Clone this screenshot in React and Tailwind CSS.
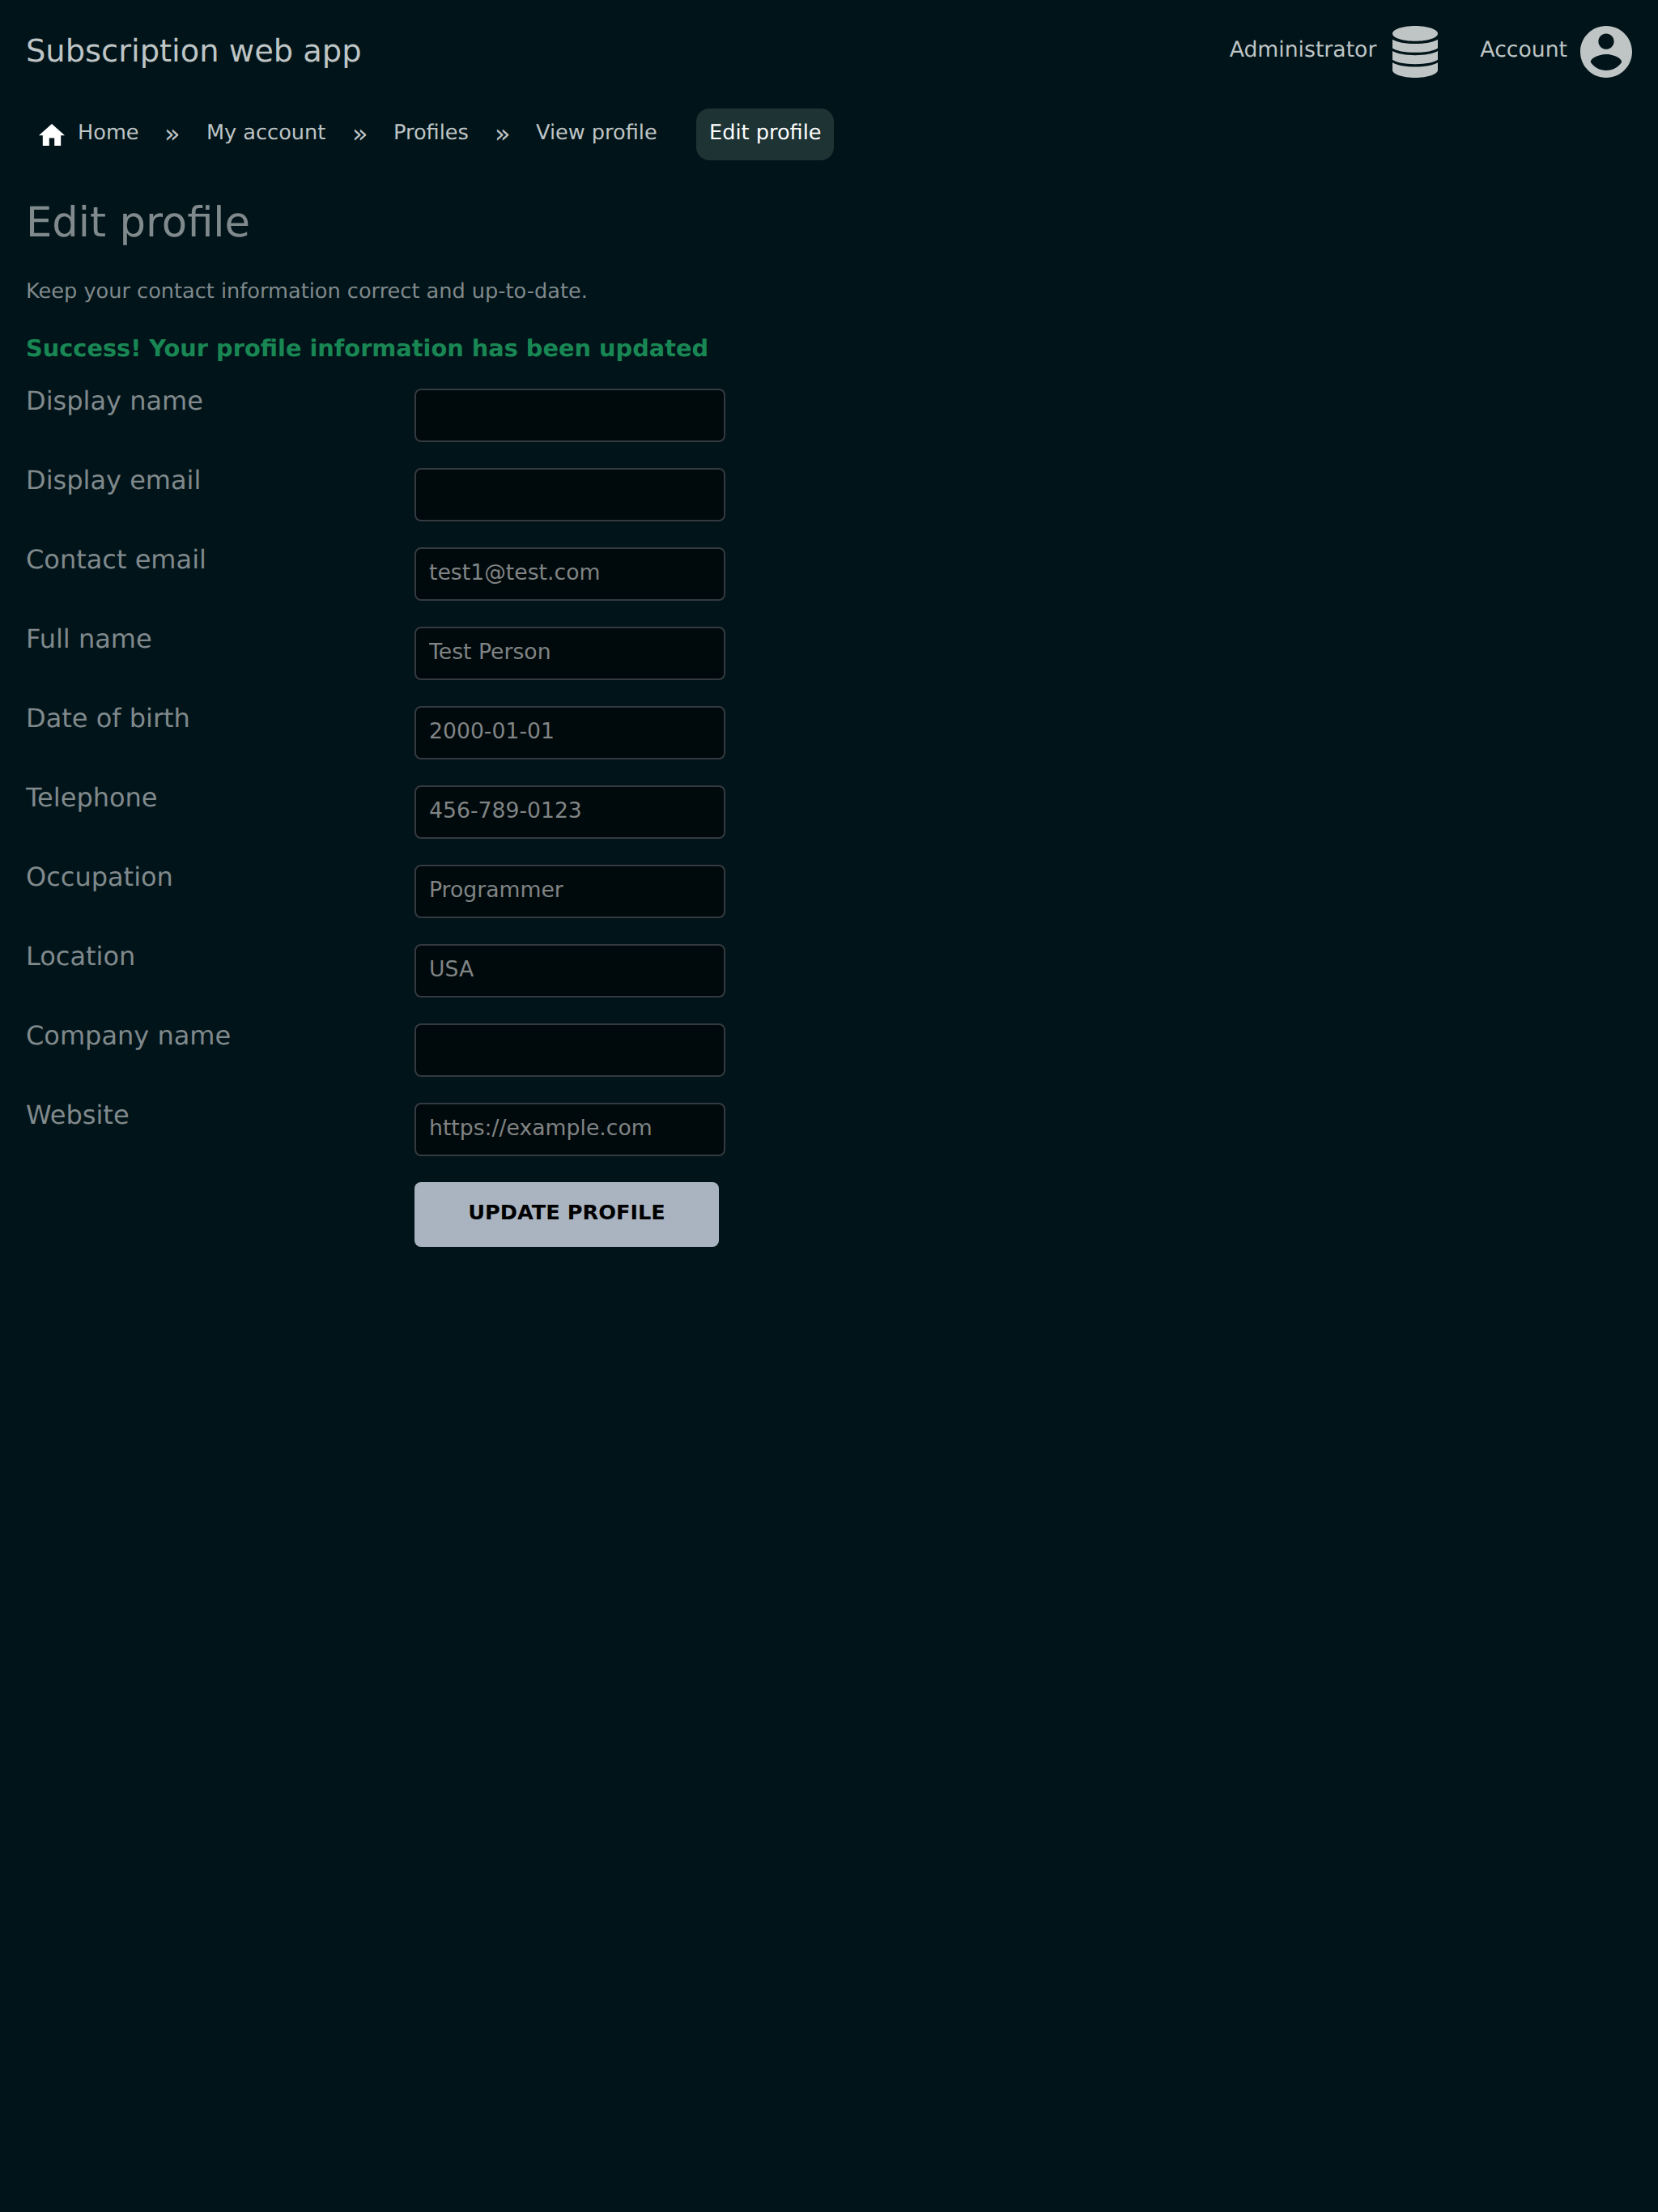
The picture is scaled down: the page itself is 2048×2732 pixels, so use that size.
const fields = [
  ["Display name", ""],
  ["Display email", ""],
  ["Contact email", "test1@test.com"],
  ["Full name", "Test Person"],
  ["Date of birth", "2000-01-01"],
  ["Telephone", "456-789-0123"],
  ["Occupation", "Programmer"],
  ["Location", "USA"],
  ["Company name", ""],
  ["Website", "https://example.com"],
];

const DatabaseIcon = () => (
  <svg className="h-16 w-14" viewBox="0 0 56 64" fill="currentColor">
    <path d="M28 0C43.500 0 56 4.300 56 9.500S43.500 18.800 28 18.800 0 14.700 0 9.500 12.500 0 28 0z" />
    <path d="M0 16.700C6 20.200 16 22 28 22s22-1.800 28-5.300v10.800c-5 3.300-14 5.300-28 5.300S5 30.800 0 27.500z" />
    <path d="M0 31C6 34.400 16 36.200 28 36.200s22-1.800 28-5.200v10.800c-5 3.300-14 5.400-28 5.400S5 45.100 0 41.800z" />
    <path d="M0 45.300C6 48.800 16 50.600 28 50.600s22-1.800 28-5.300v9.200C56 59.700 43.500 64 28 64S0 59.700 0 54.500z" />
  </svg>
);

const AccountIcon = () => (
  <svg className="size-16" viewBox="2 2 20 20" fill="currentColor">
    <path d="M12 2C6.480 2 2 6.480 2 12s4.480 10 10 10 10-4.480 10-10S17.520 2 12 2zm0 3c1.660 0 3 1.340 3 3s-1.340 3-3 3-3-1.340-3-3 1.340-3 3-3zm0 14.200c-2.500 0-4.710-1.280-6-3.220.030-1.990 4-3.080 6-3.080 1.990 0 5.970 1.090 6 3.080-1.290 1.940-3.500 3.220-6 3.220z" />
  </svg>
);

const HomeIcon = () => (
  <svg className="mt-[19px] h-[27px] w-8" viewBox="2 3 20 17" preserveAspectRatio="none" fill="white">
    <path d="M10 20v-6h4v6h5v-8h3L12 3 2 12h3v8z" />
  </svg>
);

const Separator = () => <span className="mt-[11px] w-[51px] text-[32px] leading-10">»</span>;

export default function App() {
  return (
    <div className="min-h-screen bg-[#001419] px-8 pt-8 font-['DejaVu_Sans',sans-serif] text-[25.6px] leading-10 text-[#80898c] [text-rendering:geometricPrecision]">
      <header className="flex h-16 items-start text-[26.67px] text-[#bfc4c5]">
        <div className="mt-1 flex-1 text-[38.4px] leading-[56px]">Subscription web app</div>
        <a className="mr-[52px] flex items-start">
          <span className="mt-[10px] mr-5">Administrator</span>
          <DatabaseIcon />
        </a>
        <a className="flex items-start">
          <span className="mt-[10px] mr-4">Account</span>
          <AccountIcon />
        </a>
      </header>

      <nav className="mt-[38px] flex h-16 items-start pl-4 text-[#bfc4c5]">
        <HomeIcon />
        <a className="mt-[10px] ml-4 w-[107px]">Home</a>
        <Separator />
        <a className="mt-[10px] w-[181px] pl-px">My account</a>
        <Separator />
        <a className="mt-[10px] w-[125px]">Profiles</a>
        <Separator />
        <a className="mt-[10px] w-[198px]">View profile</a>
        <a className="h-16 w-[170px] rounded-2xl bg-[#1e3334] pt-[10px] pl-4 text-white">Edit profile</a>
      </nav>

      <h1 className="mt-[45px] text-[51.2px] leading-[64px]">Edit profile</h1>
      <p className="mt-[33px]">Keep your contact information correct and up-to-date.</p>
      <p className="mt-[30px] text-[28.8px] font-bold text-[#198754]">Success! Your profile information has been updated</p>

      <form className="mt-[30px] flex flex-col gap-8">
        {fields.map(([label, value]) => (
          <label key={label} className="flex h-[66px] items-start">
            <span className="-mt-[5px] w-[480px] text-[32px]">{label}</span>
            <input
              className="h-[66px] w-96 rounded-lg border-2 border-[#343a40] bg-[#00090b] px-4 pb-[6px] text-[26.67px] text-[#808485]"
              defaultValue={value}
            />
          </label>
        ))}
        <button
          type="button"
          className="ml-[480px] h-20 w-[376px] rounded-lg bg-[#a9b4c0] pb-[6px] text-[25.6px] font-bold text-black"
        >
          UPDATE PROFILE
        </button>
      </form>
    </div>
  );
}
